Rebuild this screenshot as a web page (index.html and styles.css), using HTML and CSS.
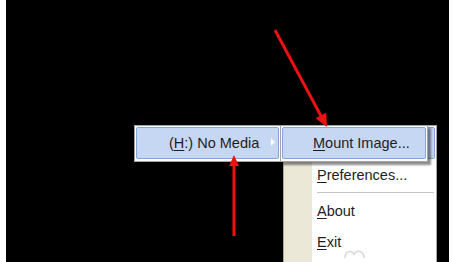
FILE: index.html
```html
<!DOCTYPE html>
<html lang="en">
<head>
    <meta charset="UTF-8">
    <title>Tray menu</title>
    <link rel="stylesheet" href="styles.css">
</head>
<body>
    <div class="screen">

        <!-- main tray menu (first row sits under the submenu) -->
        <div class="menu menu-main">
            <div class="item active"></div>
            <div class="item"><span class="label"><u>P</u>references...</span></div>
            <div class="separator"></div>
            <div class="item"><span class="label"><u>A</u>bout</span></div>
            <div class="item"><span class="label"><u>E</u>xit</span></div>
            <svg class="blob" width="24" height="12" viewBox="0 0 24 12">
                <path d="M2 12 C2 4 10 4 11 9 C12 3 21 4 21 12" fill="none" stroke="#d6d6d6" stroke-width="1.5"/>
            </svg>
        </div>

        <!-- drive entry -->
        <div class="menu menu-drive">
            <div class="item active">
                <span class="label">(<u>H</u>:) No Media</span>
                <span class="submenu-arrow"></span>
            </div>
        </div>

        <!-- drive submenu -->
        <div class="menu menu-sub">
            <div class="item active"><span class="label"><u>M</u>ount Image...</span></div>
        </div>

        <!-- red annotation arrows -->
        <svg class="arrows" width="443" height="262" viewBox="0 0 443 262">
            <line x1="269" y1="30" x2="315" y2="116" stroke="#ee1111" stroke-width="3"/>
            <polygon points="321,127 309.6,118.3 320.2,112.7" fill="#ee1111"/>
            <line x1="228" y1="236" x2="228" y2="164" stroke="#ee1111" stroke-width="3"/>
            <polygon points="228,155 223,166 233,166" fill="#ee1111"/>
        </svg>
    </div>
</body>
</html>
```
FILE: styles.css
```css
* {
    box-sizing: border-box;
}
html, body {
    margin: 0;
}
body {
    width: 453px;
    height: 262px;
    overflow: hidden;
    background-color: #fff;
    font-family: "Liberation Sans", Arial, sans-serif;
    font-size: 14.5px;
    color: #1e1e1e;
}
.screen {
    position: relative;
    margin-left: 6px;
    width: 443px;
    height: 262px;
    background-color: #000;
    overflow: hidden;
}
.menu {
    position: absolute;
    top: 125px;
    border: 1px solid #a3a3a3;
    background-color: #fdfdfd;
    padding: 1px;
}
.item {
    display: flex;
    align-items: center;
    height: 31px;
    padding-left: 32px;
    white-space: nowrap;
}
.item.active {
    position: relative;
    height: 32px;
    background-color: #c5d7f2;
    border: 1px solid #84a6da;
    border-radius: 2px;
}
.label u {
    text-decoration-thickness: 1px;
    text-underline-offset: 2px;
}
.menu-main {
    left: 277px;
    width: 154px;
    height: 140px;
    background: linear-gradient(to right, #ebe8d8 28px, #fff 28px);
}
.separator {
    height: 5px;
    margin-left: 32px;
    margin-right: 1px;
    padding-top: 2px;
}
.separator::after {
    content: "";
    display: block;
    height: 1px;
    background-color: #c4c4c4;
    border-bottom: 1px solid #fff;
    box-sizing: content-box;
}
.blob {
    position: absolute;
    left: 59px;
    bottom: 6px;
}
.menu-drive {
    left: 128px;
    width: 147px;
    height: 37px;
}
.menu-sub {
    left: 274px;
    width: 148px;
    height: 37px;
    box-shadow: 3px 3px 2px rgba(0, 0, 0, 0.45);
}
.menu-sub .item.active {
    padding-left: 30px;
}
.submenu-arrow {
    position: absolute;
    right: 3px;
    top: 10px;
    width: 0;
    height: 0;
    border-top: 4px solid transparent;
    border-bottom: 4px solid transparent;
    border-left: 4px solid #fff;
}
.arrows {
    position: absolute;
    left: 0;
    top: 0;
}
```
